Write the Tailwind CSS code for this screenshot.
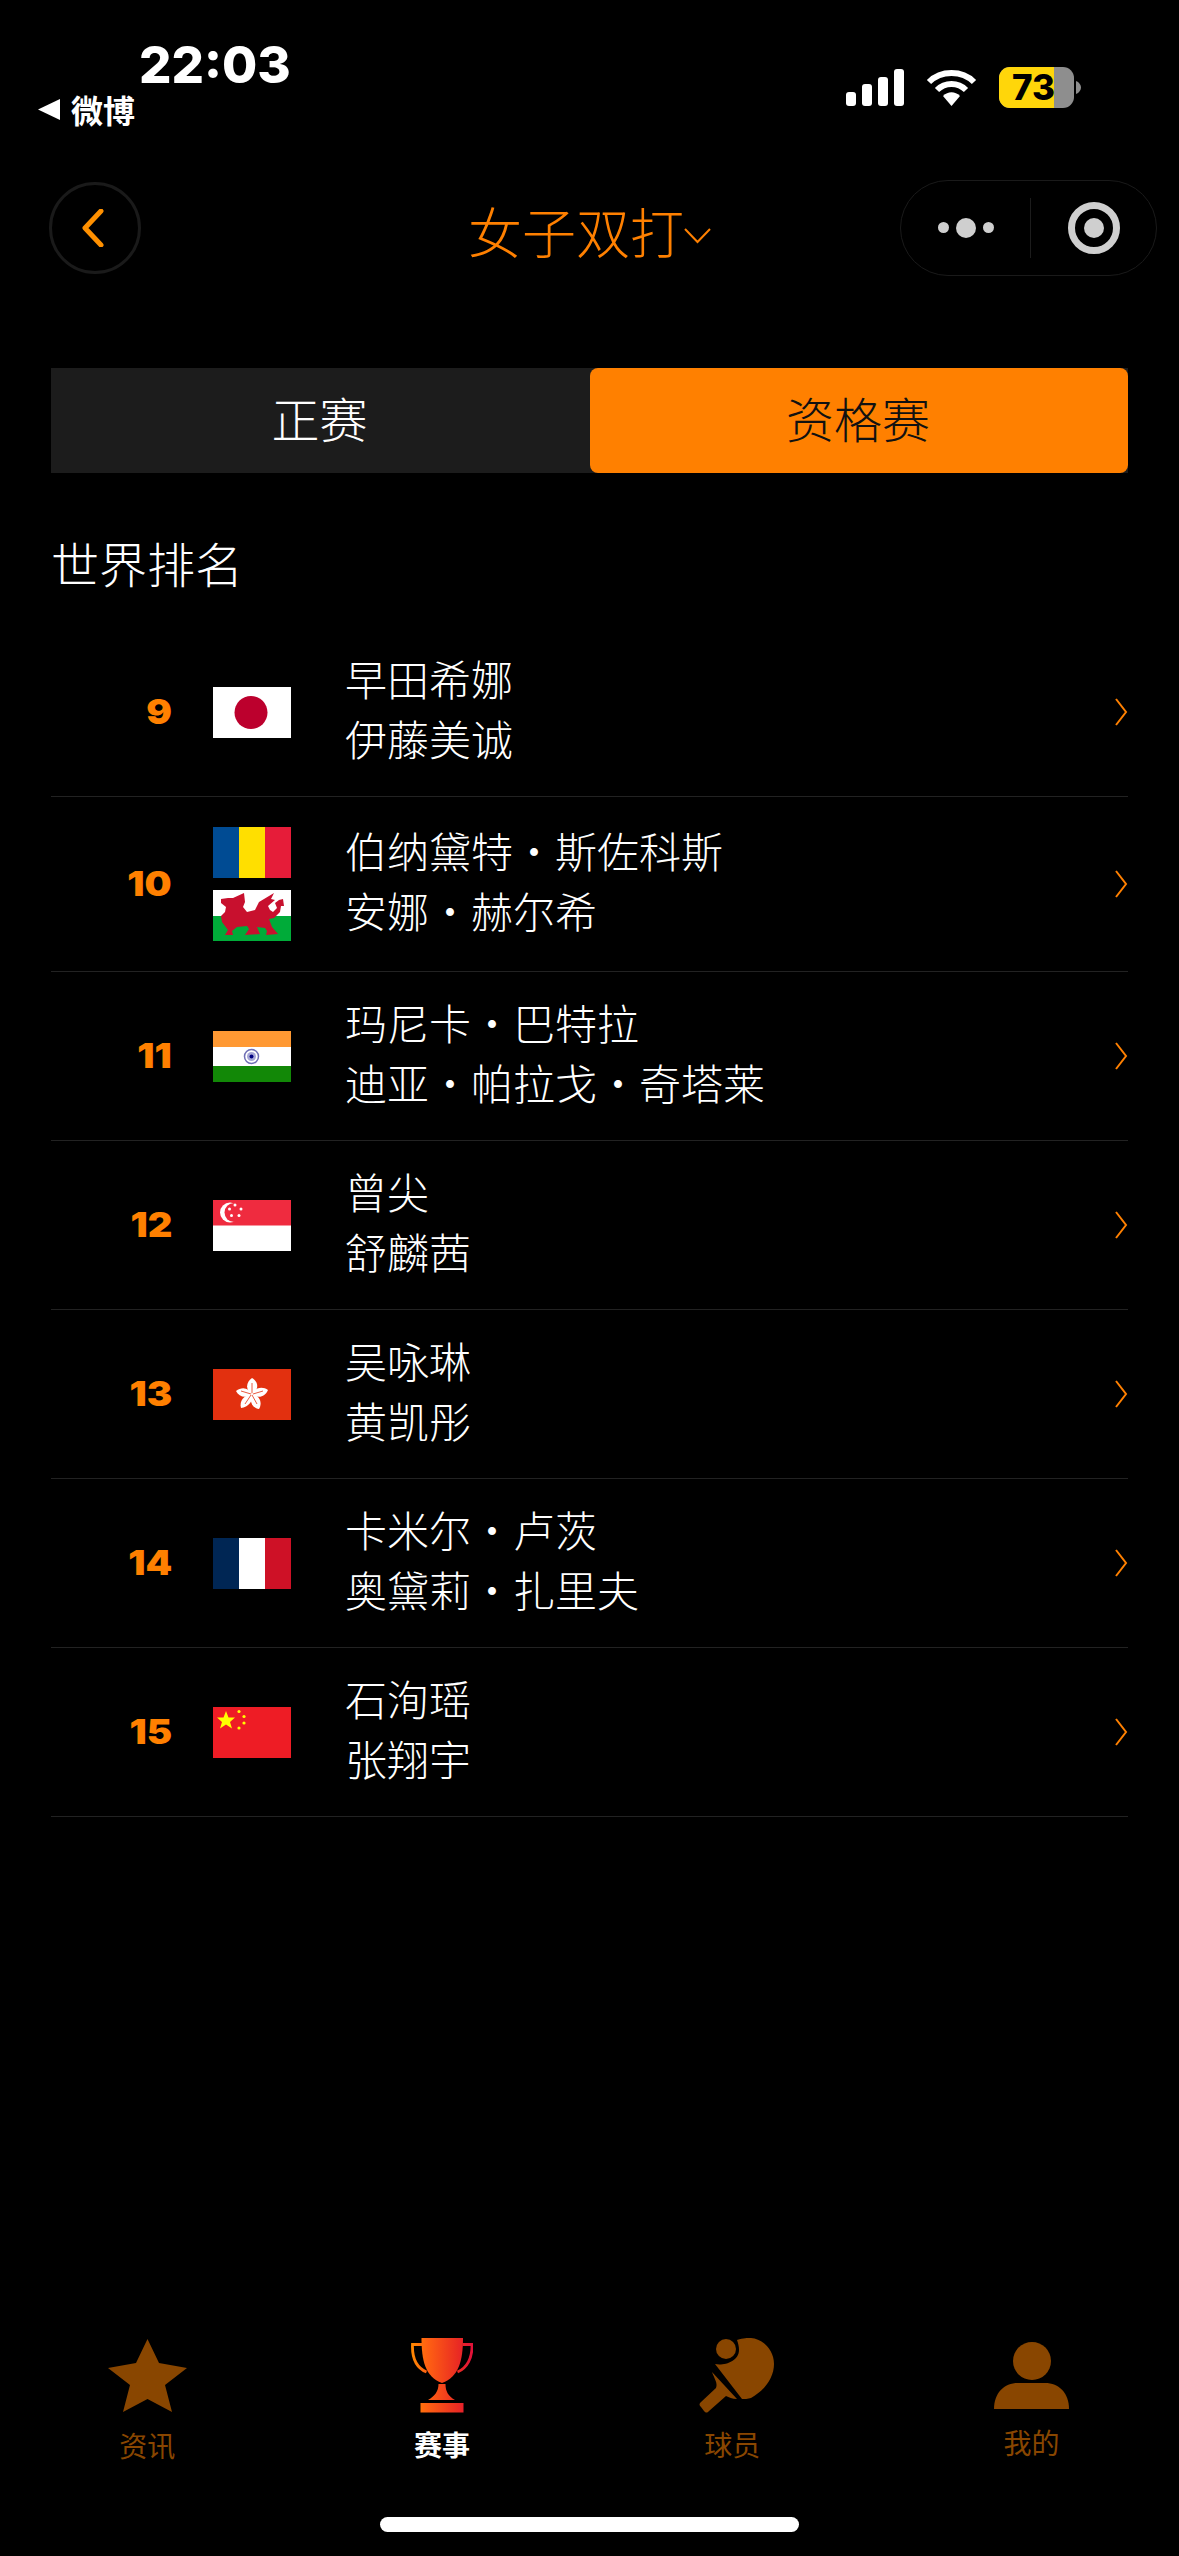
<!DOCTYPE html>
<html lang="zh"><head><meta charset="utf-8"><script src="https://cdn.jsdelivr.net/npm/@tailwindcss/browser@4"></script></head>
<body class="bg-black">
<div class="w-[1179px] h-[2556px] bg-black text-white flex flex-col overflow-hidden font-['Noto_Sans_CJK_SC','Liberation_Sans',sans-serif]">

<!-- status -->
<div class="h-[180px] shrink-0 flex justify-between">
  <div class="flex flex-col">
    <div class="pl-[139px] pt-[32px] h-[90px] font-['Inter'] font-extrabold text-[51px] leading-[66px]">22:03</div>
    <div class="flex items-center gap-[11px] pl-[38px] h-[40px] -mt-[1px]">
      <svg width="22" height="21" viewBox="0 0 22 21"><path d="M22 0V21L0 10.5Z" fill="#fff"/></svg>
      <span class="text-[32px] leading-[40px] font-bold">微博</span>
    </div>
  </div>
  <div class="flex items-start pt-[67px] pr-[98px]">
    <svg class="mt-[2px]" width="58" height="37" viewBox="0 0 58 37" fill="#fff"><rect x="0" y="23" width="10" height="14" rx="3"/><rect x="16" y="15" width="10" height="22" rx="3"/><rect x="32" y="8" width="10" height="29" rx="3"/><rect x="48" y="0" width="10" height="37" rx="3"/></svg>
    <svg class="ml-[22px] mt-[2px]" width="51" height="37" viewBox="0 0 51 37" fill="none"><path d="M3 13C15 1 36 1 48 13" stroke="#fff" stroke-width="6"/><path d="M11 21C19 13 32 13 40 21" stroke="#fff" stroke-width="6"/><path d="M17 27C22 22 29 22 34 27L25.500 37Z" fill="#fff"/></svg>
    <div class="ml-[22px] relative w-[75px] h-[41px] rounded-[11px] overflow-hidden bg-[#8e8e8e] flex">
      <div class="w-[55px] bg-[#ffd60a]"></div>
      <span class="absolute left-[13px] top-0 text-black font-['Inter'] font-extrabold text-[35px] leading-[41px]">73</span>
    </div>
    <svg class="ml-[2px] mt-[14px]" width="5" height="13" viewBox="0 0 5 13"><path d="M0 0C3 1 5 4 5 6.500C5 9 3 12 0 13Z" fill="#8e8e8e"/></svg>
  </div>
</div>

<!-- nav -->
<div class="h-[95px] shrink-0 px-[22px] flex items-center relative">
  <div class="ml-[27px] w-[92px] h-[92px] rounded-full border-[3px] border-[#1a1a1a] flex items-center justify-center">
    <svg width="24" height="38" viewBox="0 0 24 38" fill="none" class="-ml-[4px]"><path d="M20 2L4 19L20 36" stroke="#ff9000" stroke-width="5" stroke-linecap="round" stroke-linejoin="round"/></svg>
  </div>
  <div class="absolute left-[468px] top-[3px] h-[95px] flex items-center text-[#ff8000] text-[54px] leading-[70px] font-light">女子双打<svg class="mt-[10px]" width="27" height="16" viewBox="0 0 27 16" fill="none"><path d="M1 1L13.500 14L26 1" stroke="#ff8000" stroke-width="2"/></svg></div>
  <div class="ml-auto w-[257px] h-[96px] rounded-[48px] border border-[#1a1a1a] flex items-center">
    <div class="w-[129px] flex items-center justify-center gap-[7px] pl-[1px]">
      <span class="w-[11px] h-[11px] rounded-full bg-[#cfcfcf]"></span><span class="w-[20px] h-[20px] rounded-full bg-[#cfcfcf]"></span><span class="w-[11px] h-[11px] rounded-full bg-[#cfcfcf]"></span>
    </div>
    <div class="w-px h-[60px] bg-[#1c1c1c]"></div>
    <div class="flex-1 flex items-center justify-center">
      <div class="w-[52px] h-[52px] rounded-full border-[7px] border-[#cfcfcf] flex items-center justify-center"><span class="w-[20px] h-[20px] rounded-full bg-[#cfcfcf]"></span></div>
    </div>
  </div>
</div>

<!-- tabs -->
<div class="mt-[93px] mx-[51px] h-[105px] shrink-0 flex bg-[#1c1c1c] text-[48px]">
  <div class="w-[539px] flex items-center justify-center font-light pb-[7px]"><span class="-ml-[2px]">正赛</span></div>
  <div class="flex-1 flex items-center justify-center bg-[#ff8000] rounded-[8px] text-[#111] font-light pb-[7px]"><span class="-ml-[2px]">资格赛</span></div>
</div>

<div class="mt-[55px] ml-[51px] text-[48px] leading-[68px] h-[71px] font-light shrink-0">世界排名</div>

<!-- rows -->
<div class="mt-[29px] mx-[51px] flex flex-col text-[42px] leading-[60px] font-light">

  <div class="flex items-center py-[24px] border-b border-[#222]">
    <div class="w-[121px] text-right font-['Inter'] font-black text-[34px] text-[#ff8000]"><span class="inline-block origin-right scale-x-[1.12]">9</span></div>
    <div class="ml-[41px] w-[78px] flex flex-col">
      <div class="h-[63px] flex items-center"><svg width="78" height="51" viewBox="0 0 78 51"><rect width="78" height="51" fill="#fff"/><circle cx="38" cy="25.500" r="16.500" fill="#bc002d"/></svg></div>
    </div>
    <div class="ml-[54px] flex-1 -translate-y-[4px]"><div>早田希娜</div><div>伊藤美诚</div></div>
    <svg width="14" height="28" viewBox="0 0 14 28" fill="none"><path d="M2 1L12 14L2 27" stroke="#ff8000" stroke-width="2"/></svg>
  </div>

  <div class="flex items-center py-[24px] border-b border-[#222]">
    <div class="w-[121px] text-right font-['Inter'] font-black text-[34px] text-[#ff8000]"><span class="inline-block origin-right scale-x-[1.12]">10</span></div>
    <div class="ml-[41px] w-[78px] flex flex-col">
      <div class="h-[63px] flex items-center"><svg width="78" height="51" viewBox="0 0 78 51"><rect width="26" height="51" fill="#004b93"/><rect x="26" width="26" height="51" fill="#ffdf00"/><rect x="52" width="26" height="51" fill="#e61c39"/></svg></div>
      <div class="h-[63px] flex items-center"><svg width="78" height="51" viewBox="0 0 78 51"><rect width="78" height="26" fill="#fff"/><rect y="26" width="78" height="25" fill="#00ab39"/><path d="M8 9L15 8L20 8L31 3L32 12L30 17L34 22L42 20L46 12L61 3L58 9L62 10L55 16L57 20L60 22L64 18L62 13L66 10L70 9L71 16L68 16L67 22L61 28L56 29L59 37L65 44L53 45L54 41L52 38L44 37L47 44L32 45L36 39L34 36L24 37L19 41L20 45L12 45L15 40L9 32L8 26L12 22L13 17L8 13Z" fill="#c8102e"/></svg></div>
    </div>
    <div class="ml-[54px] flex-1 -translate-y-[4px]"><div>伯纳黛特・斯佐科斯</div><div>安娜・赫尔希</div></div>
    <svg width="14" height="28" viewBox="0 0 14 28" fill="none"><path d="M2 1L12 14L2 27" stroke="#ff8000" stroke-width="2"/></svg>
  </div>

  <div class="flex items-center py-[24px] border-b border-[#222]">
    <div class="w-[121px] text-right font-['Inter'] font-black text-[34px] text-[#ff8000]"><span class="inline-block origin-right scale-x-[1.12]">11</span></div>
    <div class="ml-[41px] w-[78px] flex flex-col">
      <div class="h-[63px] flex items-center"><svg width="78" height="51" viewBox="0 0 78 51"><rect width="78" height="16" fill="#f93"/><rect y="16" width="78" height="19" fill="#fff"/><rect y="35" width="78" height="16" fill="#128807"/><circle cx="38.500" cy="25.500" r="7" fill="none" stroke="#6f6fb5" stroke-width="1.500"/><circle cx="38.500" cy="25.500" r="4.500" fill="#a6a6d6"/><circle cx="38.500" cy="25.500" r="2" fill="#000080"/></svg></div>
    </div>
    <div class="ml-[54px] flex-1 -translate-y-[4px]"><div>玛尼卡・巴特拉</div><div>迪亚・帕拉戈・奇塔莱</div></div>
    <svg width="14" height="28" viewBox="0 0 14 28" fill="none"><path d="M2 1L12 14L2 27" stroke="#ff8000" stroke-width="2"/></svg>
  </div>

  <div class="flex items-center py-[24px] border-b border-[#222]">
    <div class="w-[121px] text-right font-['Inter'] font-black text-[34px] text-[#ff8000]"><span class="inline-block origin-right scale-x-[1.12]">12</span></div>
    <div class="ml-[41px] w-[78px] flex flex-col">
      <div class="h-[63px] flex items-center"><svg width="78" height="51" viewBox="0 0 78 51"><rect width="78" height="51" fill="#fff"/><rect width="78" height="25.500" fill="#ef2b3f"/><circle cx="17" cy="12.500" r="10" fill="#fff"/><circle cx="21" cy="12.500" r="9.500" fill="#ef2b3f"/><g fill="#fff"><circle cx="22" cy="5" r="1.500"/><circle cx="28" cy="9" r="1.500"/><circle cx="26" cy="15.500" r="1.500"/><circle cx="18.500" cy="15.500" r="1.500"/><circle cx="16.500" cy="9" r="1.500"/></g></svg></div>
    </div>
    <div class="ml-[54px] flex-1 -translate-y-[4px]"><div>曾尖</div><div>舒麟茜</div></div>
    <svg width="14" height="28" viewBox="0 0 14 28" fill="none"><path d="M2 1L12 14L2 27" stroke="#ff8000" stroke-width="2"/></svg>
  </div>

  <div class="flex items-center py-[24px] border-b border-[#222]">
    <div class="w-[121px] text-right font-['Inter'] font-black text-[34px] text-[#ff8000]"><span class="inline-block origin-right scale-x-[1.12]">13</span></div>
    <div class="ml-[41px] w-[78px] flex flex-col">
      <div class="h-[63px] flex items-center"><svg width="78" height="51" viewBox="0 0 78 51"><rect width="78" height="51" fill="#e2300f"/><g fill="#fff"><path d="M39 25C32 21 33 13 39 9C46 13 46 21 39 25Z"/><path d="M39 25C42 18 50 17 55 21C52 28 45 30 39 25Z"/><path d="M39 25C46 26 50 33 46 40C39 39 36 32 39 25Z"/><path d="M39 25C41 32 35 38 28 39C26 32 31 26 39 25Z"/><path d="M39 25C33 30 26 28 23 22C29 17 36 19 39 25Z"/></g><g stroke="#e2300f" stroke-width="0.800" fill="none"><path d="M39 24V14"/><path d="M40 25L50 22"/><path d="M39 26L44 35"/><path d="M38 26L32 35"/><path d="M38 25L28 22"/></g></svg></div>
    </div>
    <div class="ml-[54px] flex-1 -translate-y-[4px]"><div>吴咏琳</div><div>黄凯彤</div></div>
    <svg width="14" height="28" viewBox="0 0 14 28" fill="none"><path d="M2 1L12 14L2 27" stroke="#ff8000" stroke-width="2"/></svg>
  </div>

  <div class="flex items-center py-[24px] border-b border-[#222]">
    <div class="w-[121px] text-right font-['Inter'] font-black text-[34px] text-[#ff8000]"><span class="inline-block origin-right scale-x-[1.12]">14</span></div>
    <div class="ml-[41px] w-[78px] flex flex-col">
      <div class="h-[63px] flex items-center"><svg width="78" height="51" viewBox="0 0 78 51"><rect width="26" height="51" fill="#002654"/><rect x="26" width="26" height="51" fill="#fff"/><rect x="52" width="26" height="51" fill="#ce1126"/></svg></div>
    </div>
    <div class="ml-[54px] flex-1 -translate-y-[4px]"><div>卡米尔・卢茨</div><div>奥黛莉・扎里夫</div></div>
    <svg width="14" height="28" viewBox="0 0 14 28" fill="none"><path d="M2 1L12 14L2 27" stroke="#ff8000" stroke-width="2"/></svg>
  </div>

  <div class="flex items-center py-[24px] border-b border-[#222]">
    <div class="w-[121px] text-right font-['Inter'] font-black text-[34px] text-[#ff8000]"><span class="inline-block origin-right scale-x-[1.12]">15</span></div>
    <div class="ml-[41px] w-[78px] flex flex-col">
      <div class="h-[63px] flex items-center"><svg width="78" height="51" viewBox="0 0 78 51"><rect width="78" height="51" fill="#ee1c25"/><g fill="#ffff00"><path d="M13 4L15.500 10.500L22 10.500L17 15L19 21.500L13 17.500L7 21.500L9 15L4 10.500L10.500 10.500Z"/><circle cx="26" cy="4.500" r="1.600"/><circle cx="31" cy="9.500" r="1.600"/><circle cx="31" cy="16" r="1.600"/><circle cx="26" cy="21" r="1.600"/></g></svg></div>
    </div>
    <div class="ml-[54px] flex-1 -translate-y-[4px]"><div>石洵瑶</div><div>张翔宇</div></div>
    <svg width="14" height="28" viewBox="0 0 14 28" fill="none"><path d="M2 1L12 14L2 27" stroke="#ff8000" stroke-width="2"/></svg>
  </div>
</div>

<!-- tab bar -->
<div class="mt-auto shrink-0 grid grid-cols-4 h-[179px] text-[28px] leading-[36px] text-[#894600]">
  <div class="flex flex-col items-center">
    <svg width="79" height="73" viewBox="0 0 79 73" class="mt-[1px]"><path d="M39.500 0L51 24L79 29L57 46L64 73L39.500 60L15 73L22 46L0 29L28 24Z" fill="#894600"/></svg>
    <div class="mt-[15px]">资讯</div>
  </div>
  <div class="flex flex-col items-center text-white font-bold">
    <svg width="62" height="75" viewBox="0 0 62 75" fill="none">
      <defs><linearGradient id="g" gradientUnits="userSpaceOnUse" x1="0" x2="62" y1="0" y2="0"><stop offset="0" stop-color="#ff8a00"/><stop offset="0.25" stop-color="#ff6212"/><stop offset="0.75" stop-color="#ea2c22"/><stop offset="1" stop-color="#e0103a"/></linearGradient></defs>
      <path d="M10.500 0H52C52 22 48 39 31 45C14 39 10.500 22 10.500 0Z" fill="url(#g)"/>
      <path d="M11 6.500H1.500C1 20 6 30 15.500 34M51.500 6.500H61C61.500 20 56 30 46.500 34" stroke="url(#g)" stroke-width="2.800"/>
      <path d="M27.500 46H34.500C34.500 53 37 58 44 62H17C24 58 27.500 53 27.500 46Z" fill="url(#g)"/>
      <rect x="9.500" y="65" width="43" height="9.500" fill="url(#g)"/>
    </svg>
    <div class="mt-[13px]">赛事</div>
  </div>
  <div class="flex flex-col items-center">
    <svg width="75" height="75" viewBox="0 0 75 75" fill="#894600"><circle cx="27" cy="11" r="10"/><path d="M38 2C45 0 48 0 52 0C65 1 75 13 75 26C75 40 65 53 52 60C49 61 45 61 43 61L16 26C24 28 40 24 40 12C40 8 39 5 38 2Z"/><path d="M13 34L38 61C33 61 30 59 27 58L10 73C8 75 7 75 5 73L2 69C0 67 0 66 2 64L17 50C19 45 15 40 13 34Z"/></svg>
    <div class="mt-[13px] pr-[9px]">球员</div>
  </div>
  <div class="flex flex-col items-center">
    <svg width="75" height="69" viewBox="0 0 75 69" fill="#894600" class="mt-[3px]"><circle cx="38" cy="20" r="19"/><path d="M0 68C0 52 10 42 24 42H51C65 42 75 52 75 68Z"/></svg>
    <div class="mt-[14px]">我的</div>
  </div>
</div>
<div class="h-[39px] shrink-0 flex justify-center">
  <div class="w-[419px] h-[15px] bg-white rounded-full"></div>
</div>
</div>
</body></html>
